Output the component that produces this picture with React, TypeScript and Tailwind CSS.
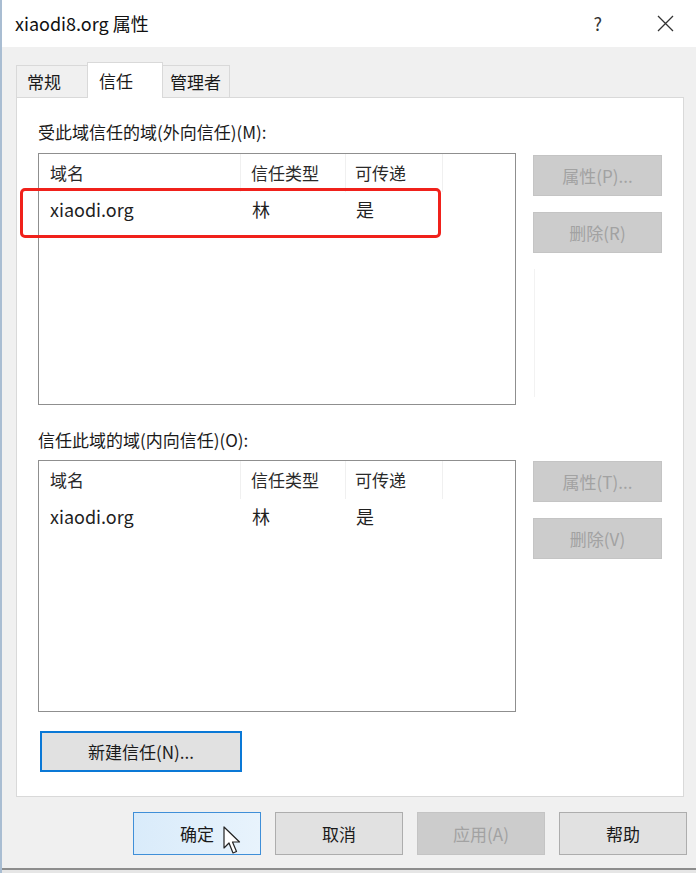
import React from "react";

const font = { fontFamily: '"Noto Sans CJK SC", "Noto Sans", sans-serif' };

function DisabledButton({ label }: { label: string }) {
  return (
    <div className="w-[129px] h-[41px] flex items-center justify-center bg-[#cccccc] border border-[#c4c4c4] text-[17px] text-[#a2a2a2]">
      {label}
    </div>
  );
}

function TrustList({
  highlight,
}: {
  highlight?: boolean;
}) {
  return (
    <div className="relative w-[478px] h-[252px] border border-[#8f8f8f] bg-white">
      {/* header */}
      <div className="flex h-[38px] text-[17px] text-[#2a2a2a]">
        <div className="w-[202px] pl-[11px] flex items-center border-r border-[#f0f0f0]">域名</div>
        <div className="w-[105px] pl-[10px] flex items-center border-r border-[#f0f0f0]">信任类型</div>
        <div className="w-[97px] pl-[9px] flex items-center border-r border-[#f0f0f0]">可传递</div>
      </div>
      <div className="flex h-[34px] text-[18px] text-[#1f1f1f]">
        <div className="w-[202px] pl-[11px] flex items-center">xiaodi.org</div>
        <div className="w-[105px] pl-[11px] flex items-center">林</div>
        <div className="w-[97px] pl-[10px] flex items-center">是</div>
      </div>
      {highlight && (
        <div className="absolute left-[-19px] top-[34px] w-[421px] h-[50px] border-[3px] border-[#f0211b] rounded-[5px]" />
      )}
    </div>
  );
}

export default function App() {
  return (
    <div
      className="w-[696px] h-[873px] bg-[#f0f0f0] flex flex-col border-l-2 border-[#a9bdd2] overflow-hidden"
      style={font}
    >
      {/* Title bar */}
      <div className="h-[47px] bg-white flex items-center pl-[13px] pr-[22px] shrink-0">
        <span className="text-[18px] text-[#111]">xiaodi8.org 属性</span>
        <span className="ml-auto text-[18px] text-[#333] mr-[55px]">?</span>
        <svg width="17" height="17" viewBox="0 0 17 17" className="text-[#333]">
          <path d="M1 1 L16 16 M16 1 L1 16" stroke="currentColor" strokeWidth="1.3" />
        </svg>
      </div>

      {/* Tabs */}
      <div className="flex items-end pl-[14px] pt-[15px] h-[50px] shrink-0">
        <div className="w-[71px] h-[32px] flex items-center pl-[10px] text-[17px] text-[#1a1a1a] border border-b-0 border-r-0 border-[#d9d9d9] bg-[#f0f0f0]">
          常规
        </div>
        <div className="w-[76px] h-[36px] flex items-center pl-[11px] text-[17px] text-[#1a1a1a] border border-b-0 border-[#d9d9d9] bg-white relative z-10 -mb-px">
          信任
        </div>
        <div className="w-[67px] h-[32px] flex items-center pl-[7px] text-[17px] text-[#1a1a1a] border border-b-0 border-l-0 border-[#d9d9d9] bg-[#f0f0f0]">
          管理者
        </div>
      </div>

      {/* Panel */}
      <div className="ml-[14px] w-[668px] h-[700px] bg-white border border-[#d9d9d9] pl-[21px] pt-[24px] shrink-0 text-[#1a1a1a]">
        <div className="text-[17px] h-[20px] leading-[20px]">受此域信任的域(外向信任)(M):</div>
        <div className="flex mt-[11px]">
          <TrustList highlight />
          <div className="ml-[17px] pt-[2px] flex flex-col gap-[16px]">
            <DisabledButton label="属性(P)..." />
            <DisabledButton label="删除(R)" />
            <div className="ml-[1px] w-px h-[128px] bg-[#f2f2f2]" />
          </div>
        </div>

        <div className="text-[17px] h-[20px] leading-[20px] mt-[25px]">信任此域的域(内向信任)(O):</div>
        <div className="flex mt-[10px]">
          <TrustList />
          <div className="ml-[17px] pt-[1px] flex flex-col gap-[16px]">
            <DisabledButton label="属性(T)..." />
            <DisabledButton label="删除(V)" />
          </div>
        </div>

        <div className="mt-[19px] ml-[2px] w-[202px] h-[41px] flex items-center justify-center bg-[#e1e1e1] border-2 border-[#0a78d6] text-[17px] text-[#1a1a1a]">
          新建信任(N)...
        </div>
      </div>

      {/* Bottom buttons */}
      <div className="flex pl-[131px] pt-[15px] gap-[14px] shrink-0">
        <div className="relative w-[128px] h-[43px] flex items-center justify-center bg-gradient-to-r from-[#d9ebfa] to-[#e8f3fc] border border-[#3f8fd8] text-[17px] text-[#1a1a1a]">
          确定
          <svg
            width="20"
            height="30"
            viewBox="0 0 20 30"
            className="absolute left-[89px] top-[13px]"
          >
            <path
              d="M1 1 L1 22 L6 17 L10 27 L13.5 25.5 L9.5 16 L16.5 16 Z"
              fill="white"
              stroke="#222"
              strokeWidth="1.2"
              strokeLinejoin="round"
            />
          </svg>
        </div>
        <div className="w-[128px] h-[43px] flex items-center justify-center bg-[#e1e1e1] border border-[#adadad] text-[17px] text-[#1a1a1a]">
          取消
        </div>
        <div className="w-[128px] h-[43px] flex items-center justify-center bg-[#cccccc] border border-[#c4c4c4] text-[17px] text-[#a2a2a2]">
          应用(A)
        </div>
        <div className="w-[128px] h-[43px] flex items-center justify-center bg-[#e1e1e1] border border-[#adadad] text-[17px] text-[#1a1a1a]">
          帮助
        </div>
      </div>

      <div className="mt-[13px] h-[2px] bg-[#8d8d8d] shrink-0" />
      <div className="flex-1 bg-[#e6e6e6]" />
    </div>
  );
}
